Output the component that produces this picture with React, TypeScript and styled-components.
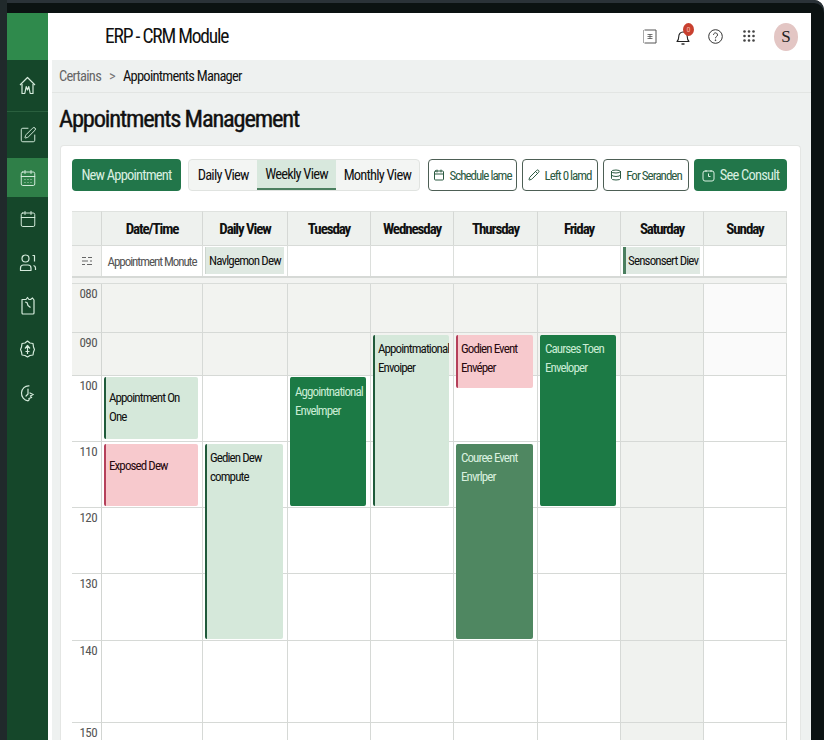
import React from "react";
import styled, { createGlobalStyle } from "styled-components";
import { Calendar, CalendarDays, Database, Pencil, SquarePen } from "lucide-react";

const GlobalStyle = createGlobalStyle`
  html, body {
    margin: 0;
    height: 100%;
    overflow: hidden;
    background: #fff;
  }
  body {
    font-family: "Roboto Condensed", "Roboto", "Liberation Sans", sans-serif;
    font-stretch: 75%;
    color: #111;
    white-space: nowrap;
  }
`;

const HomeIcon = () => (
  <svg width="17" height="19" viewBox="0 0 17 19" fill="none" stroke="currentColor" strokeWidth="1.2" strokeLinejoin="round">
    <path d="M1 9 8.5 1.5 16 9" />
    <path d="M3 8v9.5h2.8l1.4-7 1.3 3.5 1.3-3.5 1.4 7H14V8" />
  </svg>
);

const PeopleIcon = () => (
  <svg width="18" height="18" viewBox="0 0 18 18" fill="none" stroke="currentColor" strokeWidth="1.2" strokeLinejoin="round">
    <circle cx="6.5" cy="4.5" r="3.5" />
    <path d="M1.5 16.5v-2.5a3 3 0 0 1 3-3h4.5a3 3 0 0 1 3 3v2.5z" />
    <path d="M13.5 1.5h2v6M14.5 11.5c1.2.3 2 1.3 2 2.6v2" />
  </svg>
);

const NoteIcon = () => (
  <svg width="14" height="19" viewBox="0 0 14 19" fill="none" stroke="currentColor" strokeWidth="1.2" strokeLinejoin="round">
    <path d="M1 3.5h4l1.5-2 1.5 2h1.5l2-1.5 1.5 2v13a1 1 0 0 1-1 1H2a1 1 0 0 1-1-1z" />
    <path d="M4 6l2 .5 1 3 2.5 2" />
  </svg>
);

const BadgeIcon = () => (
  <svg width="15" height="18" viewBox="0 0 15 18" fill="none" stroke="currentColor" strokeWidth="1.2" strokeLinejoin="round">
    <path d="M7.5 1l2.5 2 3 .5.5 3.5 1 2.500-1 2.500-.5 3-3 .5-2.500 1.500-2.500-1.500-3-.5-.5-3-1-2.500 1-2.500.5-3.500 3-.5z" />
    <path d="M7.500 14V6M5 8.500l2.500-3 2.500 3M5.500 11.500h4" />
  </svg>
);

const DialIcon = () => (
  <svg width="15" height="18" viewBox="0 0 15 18" fill="none" stroke="currentColor" strokeWidth="1.2" strokeLinecap="round">
    <path d="M9 1.800A7 7.500 0 1 0 8 16.800c1-.6 1.500-1.500 1-2.300l2.500-1-1-1.500 2.500-1.500L10 9" />
    <path d="M8 5v5l-2 2" />
  </svg>
);

const DocIcon = () => (
  <svg width="14" height="15" viewBox="0 0 14 15" fill="none" stroke="#555" strokeWidth="1">
    <path d="M1.500 1h11.500v13H1.500" />
    <path d="M.5 1v13" stroke="#aaa" />
    <path d="M4.500 5.500h5M4.500 7.500h5M4.500 9.500h5M7 5v5" strokeWidth=".8" />
  </svg>
);

const BellIcon = () => (
  <svg width="14" height="18" viewBox="0 0 14 18" fill="none" stroke="#222" strokeWidth="1.1" strokeLinejoin="round">
    <path d="M1 13.500c1.200-1 1.700-2.200 1.700-4.500 0-3 1.700-5 4.300-5s4.300 2 4.300 5c0 2.300.5 3.500 1.700 4.500z" />
    <path d="M5.500 16h3" strokeWidth="1.400" />
  </svg>
);

const HelpIcon = () => (
  <svg width="15" height="15" viewBox="0 0 15 15" fill="none" stroke="#333" strokeWidth="1">
    <circle cx="7.500" cy="7.500" r="6.800" />
    <path d="M5.500 5.800a2 2 0 1 1 3 1.800c-.7.400-1 .8-1 1.700" />
    <circle cx="7.500" cy="11.200" r=".4" fill="#333" />
  </svg>
);

const DotsIcon = () => (
  <svg width="12" height="13" viewBox="0 0 12 13" fill="#444">
    {[1.500, 6, 10.500].map((y) =>
      [1.500, 6, 10.500].map((x) => <circle key={`${x}-${y}`} cx={x} cy={y} r="1.300" />)
    )}
  </svg>
);

const ClockBoxIcon = () => (
  <svg width="13" height="13" viewBox="0 0 13 13" fill="none" stroke="currentColor" strokeWidth="1">
    <rect x="1" y="2" width="11" height="10" rx="2" />
    <path d="M4 1v2M9 1v2M6.500 4.500v3h2" />
  </svg>
);

const FilterIcon = () => (
  <svg width="10" height="10" viewBox="0 0 10 10" stroke="#666" strokeWidth="1">
    <path d="M0 1.500h4M6 1.500h4M0 5h6M8 5h2M0 8.500h3M5 8.500h5" />
  </svg>
);

const Bezel = styled.div`
  width: 824px;
  height: 740px;
  padding: 13px 13px 0 7px;
  box-sizing: border-box;
  background: #0b1212;
  border-top-right-radius: 10px;
  box-shadow: inset 7px 0 0 #20292b, inset 0 3px 0 #2a3238;
  overflow: hidden;
`;

const Screen = styled.div`
  display: flex;
  height: 727px;
  background: #fff;
`;

const Sidebar = styled.nav`
  width: 41px;
  flex: none;
  display: flex;
  flex-direction: column;
  background: #15472a;
  color: #d5ebdc;
`;

const SideBrand = styled.div`
  height: 47px;
  flex: none;
  background: #2f8a4c;
`;

const SideItem = styled.div<{ $h: number; $active?: boolean; $line?: boolean }>`
  height: ${(p) => p.$h}px;
  flex: none;
  display: flex;
  align-items: center;
  justify-content: center;
  background: ${(p) => (p.$active ? "#2f7f48" : "transparent")};
  border-bottom: ${(p) => (p.$line ? "1px solid #2a5f3e" : "0")};
  box-sizing: border-box;
`;

const Main = styled.div`
  flex: 1;
  min-width: 0;
  display: flex;
  flex-direction: column;
`;

const TopBar = styled.header`
  height: 47px;
  flex: none;
  display: flex;
  align-items: center;
  padding-left: 57px;
  font-size: 19.5px;
  letter-spacing: -1.2px;
`;

const TopTitle = styled.div`
  flex: 1;
`;

const TopIcons = styled.div`
  display: flex;
  align-items: center;
  margin-right: 13px;
  letter-spacing: 0;
`;

const TopIcon = styled.span<{ $w: number }>`
  position: relative;
  width: ${(p) => p.$w}px;
  display: flex;
  justify-content: center;
`;

const Dot = styled.span`
  position: absolute;
  top: -5px;
  right: 5px;
  width: 11px;
  height: 13px;
  border-radius: 50%;
  background: #c8402f;
  color: #f5b5a8;
  font-size: 8px;
  line-height: 13px;
  text-align: center;
`;

const Avatar = styled.span`
  width: 24px;
  height: 28px;
  margin-left: 8px;
  border-radius: 50%;
  background: #e3c6c4;
  font-family: "Liberation Serif", serif;
  font-size: 17px;
  line-height: 28px;
  text-align: center;
  color: #222;
`;

const Content = styled.div`
  flex: 1;
  min-height: 0;
  margin-left: 4px;
  background: #eef1f0;
  display: flex;
  flex-direction: column;
`;

const Crumbs = styled.div`
  height: 33px;
  flex: none;
  display: flex;
  align-items: center;
  gap: 8px;
  padding-left: 7px;
  font-size: 14.5px;
  letter-spacing: -0.75px;
  border-bottom: 1px solid #e2e5e3;
  box-sizing: border-box;
`;

const CrumbRoot = styled.span`
  color: #666;
`;

const CrumbSep = styled.span`
  color: #777;
`;

const PageTitle = styled.h1`
  margin: 0;
  height: 52px;
  flex: none;
  padding-left: 7px;
  font-size: 24.5px;
  font-weight: 400;
  letter-spacing: -1.2px;
  line-height: 52px;
  -webkit-text-stroke: 0.4px #111;
`;

const Card = styled.section`
  flex: 1;
  margin: 0 10px 0 8px;
  padding: 13px 12px 0 11px;
  background: #fff;
  border: 1px solid #e4e6e4;
  border-bottom: 0;
  border-radius: 4px 4px 0 0;
  overflow: hidden;
`;

const Toolbar = styled.div`
  display: flex;
  height: 32px;
  margin-bottom: 20px;
`;

const PrimaryButton = styled.button<{ $w: number; $ml: number }>`
  width: ${(p) => p.$w}px;
  margin-left: ${(p) => p.$ml}px;
  display: flex;
  align-items: center;
  justify-content: center;
  gap: 5px;
  border: 0;
  border-radius: 4px;
  background: #22764a;
  color: #d9efe0;
  font: inherit;
  font-size: 14.5px;
  letter-spacing: -0.8px;
  padding: 0;
`;

const Segments = styled.div`
  width: 232px;
  margin-left: 7px;
  display: flex;
  border: 1px solid #e0e3e0;
  border-radius: 4px;
  box-sizing: border-box;
  background: #f3f5f3;
  overflow: hidden;
`;

const Segment = styled.div<{ $w: number; $active?: boolean }>`
  width: ${(p) => p.$w}px;
  display: flex;
  align-items: center;
  justify-content: center;
  font-size: 14.5px;
  letter-spacing: -0.8px;
  background: ${(p) => (p.$active ? "#d8e8dd" : "transparent")};
  border-bottom: ${(p) => (p.$active ? "2px solid #4b7f5f" : "0")};
  box-sizing: border-box;
`;

const GhostButton = styled.button<{ $w: number; $ml: number }>`
  width: ${(p) => p.$w}px;
  margin-left: ${(p) => p.$ml}px;
  display: flex;
  align-items: center;
  justify-content: center;
  gap: 4px;
  padding: 0;
  background: #fff;
  border: 1px solid #4d5f55;
  border-radius: 4px;
  color: #2b5a41;
  font: inherit;
  font-size: 13px;
  letter-spacing: -1px;
`;

const Schedule = styled.div`
  display: grid;
  grid-template-columns: 30px 101px 85px 83px 83px 84px 83px 83px 83px;
  grid-template-rows: 34px 31px 8px 49px 43px 66px 66px 66px 67px 82px 40px;
  width: 715px;
  background: #fff;
`;

const HeadCell = styled.div`
  display: flex;
  align-items: center;
  justify-content: center;
  background: #eef1ee;
  border-top: 1px solid #dfe2df;
  border-right: 1px solid #d5d8d5;
  box-sizing: border-box;
  font-size: 15px;
  font-weight: 700;
  letter-spacing: -1.1px;
`;

const SubCell = styled.div<{ $shade?: boolean }>`
  display: flex;
  align-items: center;
  justify-content: center;
  background: ${(p) => (p.$shade ? "#f4f5f3" : "#fff")};
  border-top: 1px solid #d8dbd8;
  border-right: 1px solid #dcdfdc;
  box-sizing: border-box;
  color: #777;
`;

const SubLabel = styled.span`
  font-size: 13px;
  letter-spacing: -1.05px;
  color: #555;
`;

const Chip = styled.div<{ $bar?: boolean }>`
  align-self: stretch;
  flex: 1;
  margin: 1px 3px 2px 2px;
  padding-left: ${(p) => (p.$bar ? "2px" : "3px")};
  display: flex;
  align-items: center;
  background: #dfe9e2;
  border-left: ${(p) => (p.$bar ? "3px solid #4b7f5f" : "1px solid #cdd5cf")};
  font-size: 13px;
  letter-spacing: -0.85px;
  color: #111;
`;

const GapCell = styled.div`
  background: #f2f3f1;
  border-top: 2px solid #d6d9d6;
  border-bottom: 1px solid #d9dcd9;
  box-sizing: border-box;
`;

const TimeCell = styled.div<{ $shade: string; $row: number }>`
  grid-column: 1;
  grid-row: ${(p) => p.$row};
  background: ${(p) => p.$shade};
  border-right: 1px solid #d2d5d2;
  border-bottom: 1px solid #d6d9d6;
  box-sizing: border-box;
  padding: 2px 4px 0 0;
  text-align: right;
  font-size: 13px;
  letter-spacing: -0.6px;
  color: #555;
`;

const SlotCell = styled.div<{ $shade: string; $row: number; $col: number }>`
  grid-column: ${(p) => p.$col};
  grid-row: ${(p) => p.$row};
  background: ${(p) => p.$shade};
  border-right: 1px solid #d6d9d6;
  border-bottom: 1px solid #d6d9d6;
  box-sizing: border-box;
`;

const tones = {
  light: { bg: "#d5e8da", bar: "#1f5a3a", fg: "#111" },
  pink: { bg: "#f7c9cd", bar: "#b5405a", fg: "#2a0a10" },
  dark: { bg: "#1c7a45", bar: "#1c7a45", fg: "#c9ecd4" },
  muted: { bg: "#4f8761", bar: "#4f8761", fg: "#d9f0df" },
};

const Event = styled.div<{ $col: number; $row: number; $span: number; $tone: keyof typeof tones; $h?: number; $top: number }>`
  grid-column: ${(p) => p.$col};
  grid-row: ${(p) => p.$row} / span ${(p) => p.$span};
  margin: ${(p) => (p.$row === 6 ? 1 : 2)}px 5px 2px 2px;
  padding: ${(p) => p.$top}px 2px 0 3px;
  height: ${(p) => (p.$h ? `${p.$h}px` : "auto")};
  box-sizing: border-box;
  background: ${(p) => tones[p.$tone].bg};
  border-left: 2px solid ${(p) => tones[p.$tone].bar};
  border-radius: 2px;
  color: ${(p) => tones[p.$tone].fg};
  font-size: 13px;
  letter-spacing: -0.9px;
  line-height: 18.5px;
  overflow: hidden;
`;

const days = ["Date/Time", "Daily View", "Tuesday", "Wednesday", "Thursday", "Friday", "Saturday", "Sunday"];

const slots = [
  { label: "080", base: "#f2f3f0", last: "#fafafa" },
  { label: "090", base: "#f2f3f0", last: "#fafafa" },
  { label: "100", base: "#fff", last: "#fff" },
  { label: "110", base: "#fff", last: "#fff" },
  { label: "120", base: "#fff", last: "#fff" },
  { label: "130", base: "#fff", last: "#fff" },
  { label: "140", base: "#fff", last: "#fff" },
  { label: "150", base: "#fff", last: "#fff" },
];

const events = [
  { col: 2, row: 6, span: 1, tone: "light", top: 12, h: 62, text: ["Appointment On", "One"] },
  { col: 2, row: 7, span: 1, tone: "pink", top: 13, text: ["Exposed Dew"] },
  { col: 3, row: 7, span: 3, tone: "light", top: 5, text: ["Gedien Dew", "compute"] },
  { col: 4, row: 6, span: 2, tone: "dark", top: 6, text: ["Aggointnational", "Envelmper"] },
  { col: 5, row: 5, span: 3, tone: "light", top: 5, text: ["Appointmational", "Envoiper"] },
  { col: 6, row: 5, span: 1, tone: "pink", top: 5, h: 53, text: ["Godien Event", "Envéper"] },
  { col: 6, row: 7, span: 3, tone: "muted", top: 5, text: ["Couree Event", "Envrlper"] },
  { col: 7, row: 5, span: 3, tone: "dark", top: 5, text: ["Caurses Toen", "Enveloper"] },
] as const;

export default function App() {
  return (
    <>
      <GlobalStyle />
      <Bezel>
        <Screen>
          <Sidebar>
            <SideBrand />
            <SideItem $h={52} $line><HomeIcon /></SideItem>
            <SideItem $h={46}><SquarePen size={18} strokeWidth={1.3} /></SideItem>
            <SideItem $h={39} $active><CalendarDays size={18} strokeWidth={1.3} /></SideItem>
            <SideItem $h={44}><Calendar size={18} strokeWidth={1.3} /></SideItem>
            <SideItem $h={43}><PeopleIcon /></SideItem>
            <SideItem $h={43}><NoteIcon /></SideItem>
            <SideItem $h={44}><BadgeIcon /></SideItem>
            <SideItem $h={44}><DialIcon /></SideItem>
          </Sidebar>
          <Main>
            <TopBar>
              <TopTitle>ERP - CRM Module</TopTitle>
              <TopIcons>
                <TopIcon $w={33}><DocIcon /></TopIcon>
                <TopIcon $w={33}><BellIcon /><Dot>0</Dot></TopIcon>
                <TopIcon $w={33}><HelpIcon /></TopIcon>
                <TopIcon $w={34}><DotsIcon /></TopIcon>
                <Avatar>S</Avatar>
              </TopIcons>
            </TopBar>
            <Content>
              <Crumbs>
                <CrumbRoot>Certains</CrumbRoot>
                <CrumbSep>&gt;</CrumbSep>
                <span>Appointments Manager</span>
              </Crumbs>
              <PageTitle>Appointments Management</PageTitle>
              <Card>
                <Toolbar>
                  <PrimaryButton $w={109} $ml={0}>New Appointment</PrimaryButton>
                  <Segments>
                    <Segment $w={69}>Daily View</Segment>
                    <Segment $w={79} $active>Weekly View</Segment>
                    <Segment $w={84}>Monthly View</Segment>
                  </Segments>
                  <GhostButton $w={89} $ml={8}><Calendar size={12} />Schedule lame</GhostButton>
                  <GhostButton $w={76} $ml={5}><Pencil size={12} />Left 0 lamd</GhostButton>
                  <GhostButton $w={86} $ml={5}><Database size={12} />For Seranden</GhostButton>
                  <PrimaryButton $w={93} $ml={5}><ClockBoxIcon />See Consult</PrimaryButton>
                </Toolbar>
                <Schedule>
                  <HeadCell />
                  {days.map((d) => <HeadCell key={d}>{d}</HeadCell>)}

                  <SubCell $shade><FilterIcon /></SubCell>
                  <SubCell><SubLabel>Appointment Monute</SubLabel></SubCell>
                  <SubCell><Chip>Navlgemon Dew</Chip></SubCell>
                  <SubCell /><SubCell /><SubCell /><SubCell />
                  <SubCell><Chip $bar>Sensonsert Diev</Chip></SubCell>
                  <SubCell />

                  {Array.from({ length: 9 }, (_, i) => <GapCell key={i} />)}

                  {slots.map((s, r) => (
                    <React.Fragment key={s.label}>
                      <TimeCell $row={r + 4} $shade={s.base}>{s.label}</TimeCell>
                      {days.map((d, c) => (
                        <SlotCell
                          key={d}
                          $row={r + 4}
                          $col={c + 2}
                          $shade={d === "Saturday" ? "#f0f2ef" : d === "Sunday" ? s.last : s.base}
                        />
                      ))}
                    </React.Fragment>
                  ))}

                  {events.map((e) => (
                    <Event
                      key={e.text[0]}
                      $col={e.col}
                      $row={e.row}
                      $span={e.span}
                      $tone={e.tone}
                      $top={e.top}
                      $h={"h" in e ? e.h : undefined}
                    >
                      {e.text.map((t) => <div key={t}>{t}</div>)}
                    </Event>
                  ))}
                </Schedule>
              </Card>
            </Content>
          </Main>
        </Screen>
      </Bezel>
    </>
  );
}
